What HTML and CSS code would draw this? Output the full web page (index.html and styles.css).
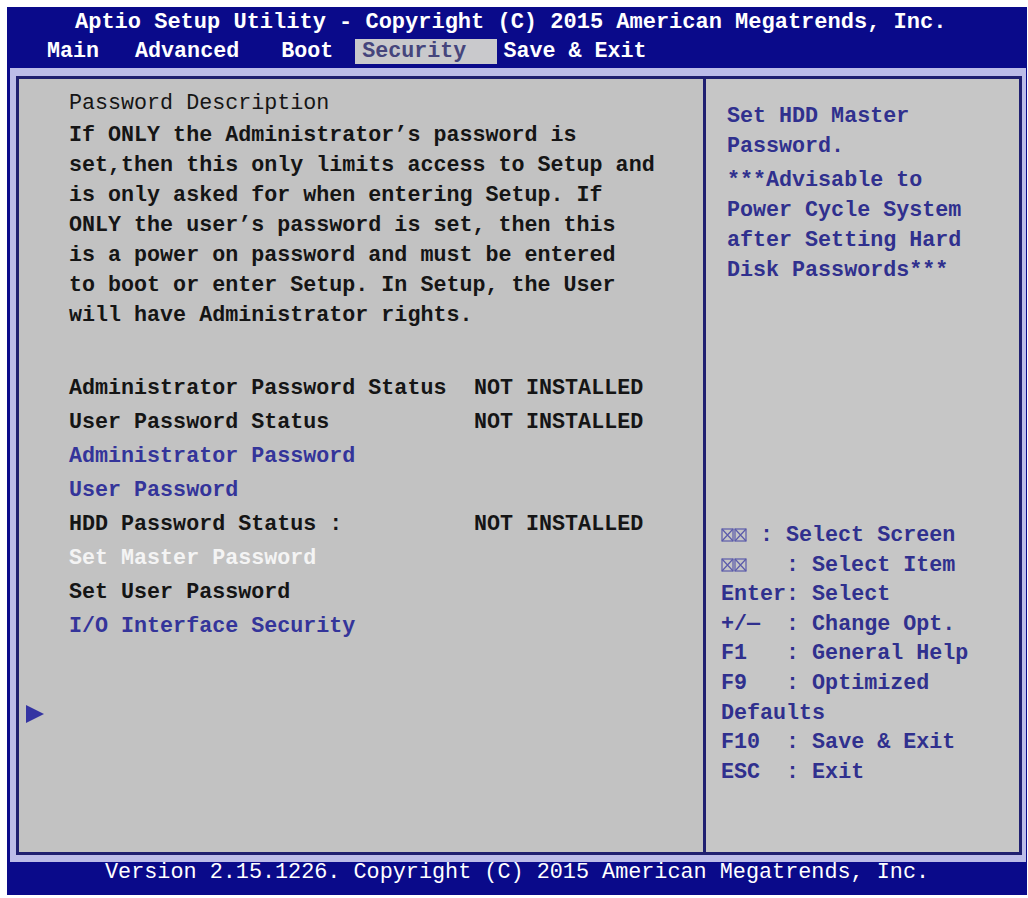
FILE: index.html
```html
<!DOCTYPE html>
<html lang="en">
<head>
  <meta charset="UTF-8">
  <title>Aptio Setup Utility - Security</title>
  <link rel="stylesheet" href="styles.css">
</head>
<body>
  <div class="bios">
    <div class="title">Aptio Setup Utility - Copyright (C) 2015 American Megatrends, Inc.</div>
    <div class="tabs">
      <span class="tab tab-main">Main</span>
      <span class="tab tab-advanced">Advanced</span>
      <span class="tab tab-boot">Boot</span>
      <span class="tab active">Security</span>
      <span class="tab tab-save">Save &amp; Exit</span>
    </div>

    <div class="frame">
      <div class="panel">
        <div class="left">
          <div class="desc-title">Password Description</div>
          <div class="desc">
            <div>If ONLY the Administrator’s password is</div>
            <div>set,then this only limits access to Setup and</div>
            <div>is only asked for when entering Setup. If</div>
            <div>ONLY the user’s password is set, then this</div>
            <div>is a power on password and must be entered</div>
            <div>to boot or enter Setup. In Setup, the User</div>
            <div>will have Administrator rights.</div>
          </div>

          <div class="items">
            <div class="row"><span>Administrator Password Status</span><span>NOT INSTALLED</span></div>
            <div class="row"><span>User Password Status</span><span>NOT INSTALLED</span></div>
            <div class="row link"><span>Administrator Password</span></div>
            <div class="row link"><span>User Password</span></div>
            <div class="row"><span>HDD Password Status :</span><span>NOT INSTALLED</span></div>
            <div class="row selected"><span>Set Master Password</span></div>
            <div class="row"><span>Set User Password</span></div>
            <div class="row link"><span>I/O Interface Security</span></div>
          </div>

          <div class="more">
            <svg width="20" height="20" viewBox="0 0 20 20"><polygon points="1,1 19,10 1,19" fill="#3434a2"/></svg>
          </div>
        </div>

        <div class="right">
          <div class="help-text">
            <div>Set HDD Master</div>
            <div>Password.</div>
          </div>
          <div class="help-text note">
            <div>***Advisable to</div>
            <div>Power Cycle System</div>
            <div>after Setting Hard</div>
            <div>Disk Passwords***</div>
          </div>

          <div class="keys">
            <div class="key"><span class="keybox"><svg width="26" height="14" viewBox="0 0 26 14"><g fill="none" stroke="#5b5bab" stroke-width="1.2"><rect x="1" y="1" width="11" height="12"/><path d="M1 1 L12 13 M12 1 L1 13"/><rect x="14" y="1" width="11" height="12"/><path d="M14 1 L25 13 M25 1 L14 13"/></g></svg></span> : Select Screen</div>
            <div class="key"><span class="keybox"><svg width="26" height="14" viewBox="0 0 26 14"><g fill="none" stroke="#5b5bab" stroke-width="1.2"><rect x="1" y="1" width="11" height="12"/><path d="M1 1 L12 13 M12 1 L1 13"/><rect x="14" y="1" width="11" height="12"/><path d="M14 1 L25 13 M25 1 L14 13"/></g></svg></span>   : Select Item</div>
            <div class="key">Enter: Select</div>
            <div class="key">+/—  : Change Opt.</div>
            <div class="key">F1   : General Help</div>
            <div class="key">F9   : Optimized</div>
            <div class="key">Defaults</div>
            <div class="key">F10  : Save &amp; Exit</div>
            <div class="key">ESC  : Exit</div>
          </div>
        </div>
      </div>
    </div>

    <div class="footer">Version 2.15.1226. Copyright (C) 2015 American Megatrends, Inc.</div>
  </div>
</body>
</html>
```

FILE: styles.css
```css
body {
  margin: 0;
  background-color: #ffffff;
  font-family: "Liberation Mono", "Courier New", monospace;
}

.bios {
  display: flex;
  flex-direction: column;
  width: 1020px;
  height: 888px;
  margin: 7px 0 0 7px;
  background-color: #0a0a8a;
  color: #ffffff;
}

.title {
  height: 31px;
  line-height: 31px;
  padding-left: 68px;
  font-size: 22px;
  font-weight: bold;
  white-space: nowrap;
}

.tabs {
  display: flex;
  align-items: flex-start;
  height: 29px;
  padding-top: 1px;
  padding-left: 40px;
  font-size: 21.7px;
  font-weight: bold;
}

.tab {
  line-height: 25px;
  white-space: nowrap;
}

.tab-advanced {
  margin-left: 36px;
}

.tab-boot {
  margin-left: 42px;
}

.tab.active {
  margin-left: 22px;
  padding: 0 31px 0 7px;
  background-color: #c9c9cc;
  color: #45457c;
}

.tab-save {
  margin-left: 6px;
}

.frame {
  flex: 1;
  min-height: 0;
  margin: 0 1px 0 3px;
  padding: 8px 4px 7px 6px;
  background-color: #bcbce8;
}

.panel {
  display: grid;
  grid-template-columns: 684px 1fr;
  height: 100%;
  box-sizing: border-box;
  border: 3px solid #1f1f70;
  background-color: #c2c2c2;
  font-size: 21.7px;
  font-weight: bold;
}

.left {
  display: flex;
  flex-direction: column;
  padding: 10px 0 0 50px;
  color: #151515;
}

.desc-title {
  line-height: 30px;
  margin-bottom: 2px;
  font-weight: normal;
}

.desc div {
  line-height: 30px;
  white-space: nowrap;
}

.items {
  margin-top: 41px;
}

.row {
  display: grid;
  grid-template-columns: 405px auto;
  line-height: 34px;
  white-space: nowrap;
}

.row.link {
  color: #34349a;
}

.row.selected {
  color: #f4f4f4;
}

.more {
  margin: 60px 0 0 -44px;
  height: 20px;
}

.more svg {
  display: block;
}

.right {
  display: flex;
  flex-direction: column;
  border-left: 3px solid #1f1f70;
  background-color: #c6c6c6;
  color: #30308e;
}

.help-text {
  padding: 23px 0 0 21px;
}

.help-text div {
  line-height: 30px;
  white-space: nowrap;
}

.help-text.note {
  padding-top: 4px;
}

.keys {
  margin-top: 235px;
  padding-left: 15px;
}

.key {
  line-height: 29.6px;
  white-space: pre;
}

.keybox {
  display: inline-block;
  width: 26px;
  vertical-align: -1px;
}

.keybox svg {
  display: block;
}

.footer {
  height: 33px;
  line-height: 22px;
  padding-left: 98px;
  font-size: 21.8px;
  white-space: nowrap;
}
```
